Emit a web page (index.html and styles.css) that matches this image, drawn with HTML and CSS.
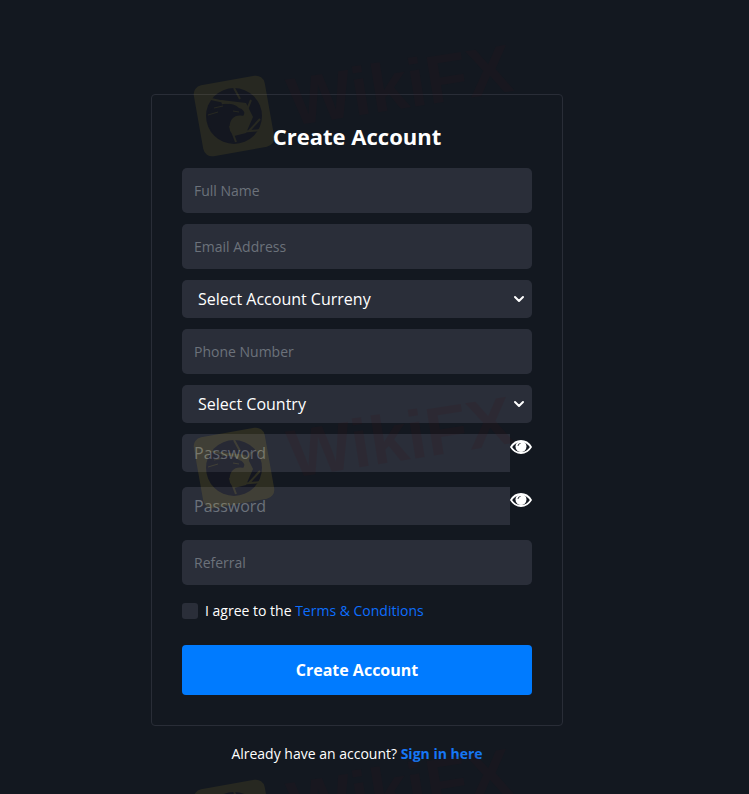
FILE: index.html
```html
<!DOCTYPE html>
<html lang="en">
<head>
    <meta charset="UTF-8">
    <meta name="viewport" content="width=device-width, initial-scale=1.0">
    <title>Create Account</title>
    <link rel="stylesheet" href="styles.css">
</head>
<body>
    <!-- Shared icons -->
    <svg class="icon-defs" width="0" height="0" aria-hidden="true">
        <symbol id="icon-eye" viewBox="0 0 22 14">
            <path d="M1 7C3.500 3 7 1 11 1s7.500 2 10 6c-2.500 4-6 6-10 6S3.500 11 1 7z" fill="none" stroke="currentColor" stroke-width="1.800" stroke-linejoin="round"/>
            <circle cx="11" cy="6.500" r="5.500"/>
            <path d="M8 6Q8 3.500 10.500 3.500" fill="none" stroke="#131820" stroke-width="0.800"/>
        </symbol>
        <symbol id="watermark" viewBox="0 0 340 120">
            <rect x="7" y="38" width="72" height="72" rx="9" transform="rotate(-10 43 74)" fill="#b49b28"/>
            <circle cx="43" cy="74" r="28" fill="#1b1020"/>
            <path d="M30 58l25 3 7 14-7 16-12 3-7-9z" fill="#b49b28"/>
            <path d="M16 73c3-6 7-9 12-10 8-2 15-2 20 3 4 1 6 4 6 8-5-1-10-1-13 3-3 4-4 12 2 22-7 3-14 0-20-7-4-6-7-12-7-19z" fill="#1b1020"/>
            <path d="M20 57l18 4M43 46l6 11M60 58l-7 17M69 77l-11 12M70 88l-22 2M39 84l6 16" fill="none" stroke="#b49b28" stroke-width="2"/>
            <path d="M17 73l10-3M23 66l9-2M42 69l6 1" fill="none" stroke="#b49b28" stroke-width="1"/>
            <text class="watermark-text" x="101" y="84" transform="rotate(-9 101 84)">WikiFX</text>
        </symbol>
    </svg>

    <main class="page">
        <form class="card">
            <h1 class="title">Create Account</h1>

            <input class="field" type="text" placeholder="Full Name" aria-label="Full Name">
            <input class="field" type="email" placeholder="Email Address" aria-label="Email Address">
            <select class="field select" aria-label="Account Currency">
                <option>Select Account Curreny</option>
            </select>
            <input class="field" type="tel" placeholder="Phone Number" aria-label="Phone Number">
            <select class="field select" aria-label="Country">
                <option>Select Country</option>
            </select>

            <div class="password-row">
                <input class="field password" type="password" placeholder="Password" aria-label="Password">
                <button class="eye-btn" type="button" aria-label="Show password"><svg class="eye"><use href="#icon-eye"/></svg></button>
            </div>
            <div class="password-row">
                <input class="field password" type="password" placeholder="Password" aria-label="Confirm password">
                <button class="eye-btn" type="button" aria-label="Show password"><svg class="eye"><use href="#icon-eye"/></svg></button>
            </div>

            <input class="field" type="text" placeholder="Referral" aria-label="Referral">

            <div class="terms">
                <input class="checkbox" type="checkbox" id="agree">
                <label for="agree">I agree to the <a href="#">Terms &amp; Conditions</a></label>
            </div>

            <button class="submit-btn" type="submit">Create Account</button>
        </form>
        <p class="signin">Already have an account? <a href="#">Sign in here</a></p>
    </main>

    <div class="watermarks" aria-hidden="true">
        <svg class="watermark"><use href="#watermark"/></svg>
        <svg class="watermark middle"><use href="#watermark"/></svg>
        <svg class="watermark"><use href="#watermark"/></svg>
    </div>
</body>
</html>
```
FILE: styles.css
```css
* {
    box-sizing: border-box;
}
body {
    margin: 0;
    position: relative;
    min-height: 100vh;
    overflow: hidden;
    background: #131820;
    color: #fff;
    font-family: "Segoe UI", "Open Sans", "Noto Sans", sans-serif;
    font-size: 14px;
}
a {
    color: #0d6efd;
    text-decoration: none;
}
.icon-defs {
    position: absolute;
}
.page {
    padding: 94px 35px 24px 0;
}
.card {
    display: flex;
    flex-direction: column;
    gap: 11px;
    max-width: 412px;
    margin: 0 auto;
    padding: 24px 30px 30px;
    border: 1px solid #292d37;
    border-radius: 4px;
}
.title {
    margin: 0 0 3px;
    font-size: 22px;
    line-height: 35px;
    font-weight: 700;
    text-align: center;
}
.field {
    width: 100%;
    height: 45px;
    padding: 0 12px;
    border: none;
    border-radius: 5px;
    background-color: #2a2e39;
    color: #fff;
    font-family: inherit;
    font-size: 14px;
}
.field::placeholder {
    color: #6c727b;
    opacity: 1;
}
.select {
    height: 38px;
    padding: 0 36px 0 16px;
    appearance: none;
    font-size: 16px;
    background-image: url("data:image/svg+xml,%3Csvg xmlns='http://www.w3.org/2000/svg' viewBox='0 0 12 12'%3E%3Cpath d='M2 4l4 4 4-4' fill='none' stroke='white' stroke-width='2' stroke-linecap='round' stroke-linejoin='round'/%3E%3C/svg%3E");
    background-repeat: no-repeat;
    background-position: right 7px center;
    background-size: 12px;
}
.password-row {
    display: flex;
    align-items: flex-start;
    margin-bottom: 4px;
}
.password {
    flex: 1;
    min-width: 0;
    height: 38px;
    border-radius: 5px 0 0 5px;
    font-size: 16px;
}
.eye-btn {
    padding: 6px 0 0;
    border: none;
    background: none;
    color: #fff;
    cursor: pointer;
}
.eye {
    display: block;
    width: 22px;
    height: 14px;
    fill: currentColor;
}
.terms {
    display: flex;
    align-items: center;
    gap: 7px;
    margin: 4px 0 12px;
    line-height: 22px;
}
.checkbox {
    appearance: none;
    width: 16px;
    height: 16px;
    margin: 0;
    border-radius: 3px;
    background: #2a2e39;
}
.checkbox:checked {
    background: #007bff;
}
.submit-btn {
    height: 50px;
    border: none;
    border-radius: 4px;
    background: #007bff;
    color: #fff;
    font-family: inherit;
    font-size: 16px;
    font-weight: 700;
    cursor: pointer;
}
.signin {
    margin: 17px 0 0;
    line-height: 22px;
    text-align: center;
}
.signin a {
    font-weight: 700;
    color: #1677f5;
}
/* faded brand marks laid over the whole page */
.watermarks {
    position: absolute;
    top: 42px;
    left: 191px;
    display: flex;
    flex-direction: column;
    gap: 232px;
    height: calc(100% - 42px);
    overflow: hidden;
    pointer-events: none;
}
.watermark {
    flex: none;
    width: 340px;
    height: 120px;
    opacity: 0.12;
}
.watermark.middle {
    opacity: 0.16;
}
.watermark-text {
    font-family: "Liberation Sans", Arial, sans-serif;
    font-size: 68px;
    font-weight: 700;
    fill: #3c1218;
}
```
